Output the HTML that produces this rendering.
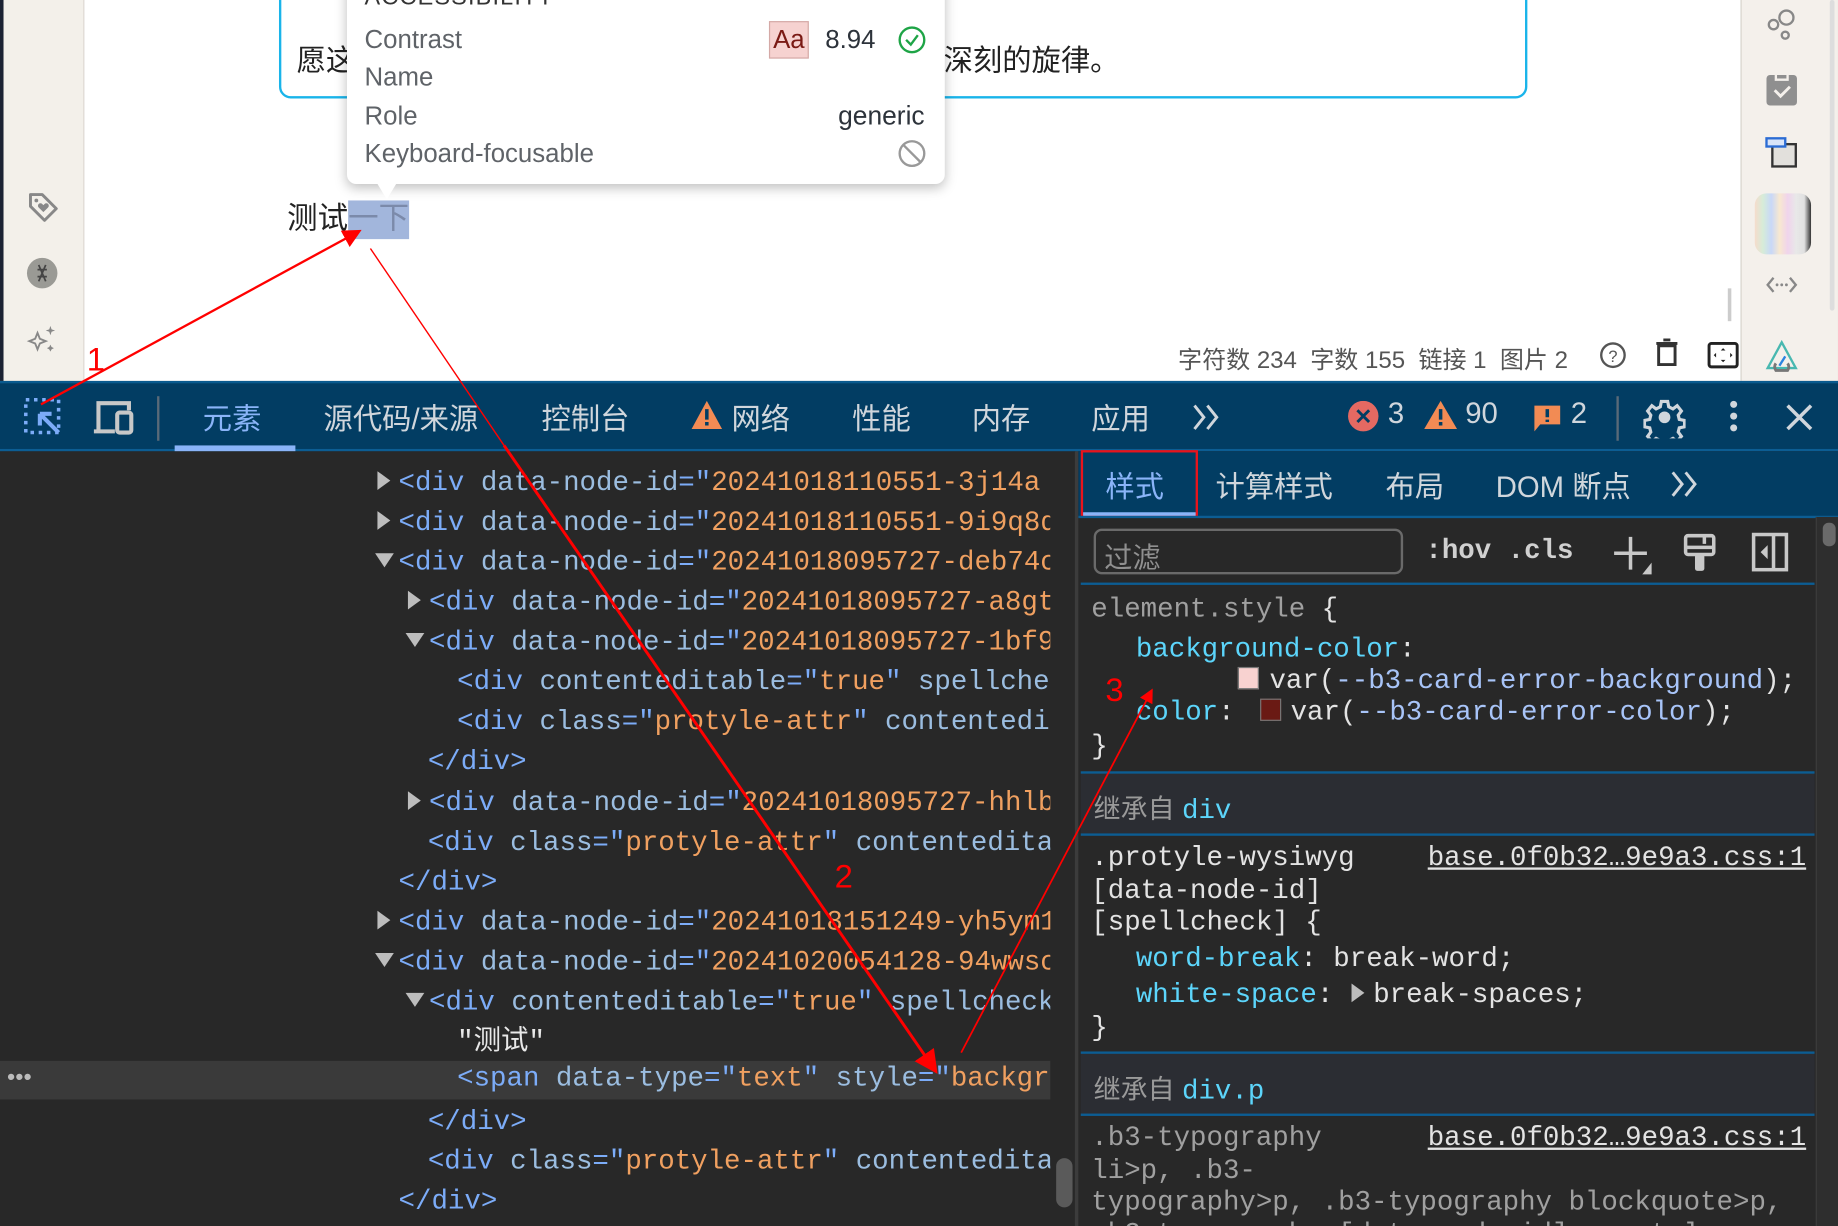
<!DOCTYPE html>
<html><head><meta charset="utf-8"><style>
*{margin:0;padding:0;box-sizing:border-box}
html,body{width:1838px;height:1226px;overflow:hidden;background:#282828}
#w{position:absolute;left:0;top:0;width:1568px;height:1046px;transform:scale(1.17219);transform-origin:0 0;overflow:hidden;font-family:"Liberation Sans","Noto Sans CJK SC",sans-serif}
.a{position:absolute;white-space:pre}
.m{font-family:"Liberation Mono","Noto Sans CJK SC",monospace;font-size:23.4px;line-height:28px}
.tg{color:#7cacf8}.an{color:#9bbde0}.av{color:#f0a060}.tx{color:#e8e8e8}
.tr,.td{display:inline-block;width:20px;height:16px;position:relative}
.tr:before{content:"";position:absolute;left:2px;top:0;border-top:8px solid transparent;border-bottom:8px solid transparent;border-left:11px solid #bdbdbd}
.td:before{content:"";position:absolute;left:0;top:2px;border-left:8px solid transparent;border-right:8px solid transparent;border-top:12px solid #bdbdbd}
.pn{color:#5cd5fb}.vn{color:#a8c4f8}.wt{color:#e3e3e3}.gr{color:#a0a0a0}
.tab{color:#d0d6dc;font-size:25px}
</style></head><body><div id="w">
<!-- left sidebar -->
<div class="a" style="left:0;top:0;width:72px;height:325px;background:#f3f0ea"></div>
<div class="a" style="left:0;top:0;width:3px;height:325px;background:#1b2333"></div>
<div class="a" style="left:71px;top:0;width:1px;height:325px;background:#dedad3"></div>
<svg class="a" style="left:22px;top:162px" width="30" height="30" viewBox="0 0 30 30"><path d="M4 4h10l12 12-10 10L4 14z" fill="none" stroke="#888" stroke-width="2.5" stroke-linejoin="round"/><circle cx="9" cy="9" r="1.6" fill="#888"/><path d="M15 19l-4-4a2 2 0 0 1 3-3l1 1 1-1a2 2 0 0 1 3 3z" fill="#888"/></svg>
<div class="a" style="left:23px;top:220px;width:26px;height:26px;border-radius:13px;background:#9a9a95"></div>
<svg class="a" style="left:23px;top:220px" width="26" height="26"><path d="M10 6l6 14M16 6l-6 14M9 10h8M9 16h8" stroke="#444" stroke-width="1.5" fill="none"/></svg>
<svg class="a" style="left:22px;top:276px" width="28" height="28"><path d="M10 8l2 5 5 2-5 2-2 5-2-5-5-2 5-2z" fill="none" stroke="#888" stroke-width="1.6"/><path d="M21 2l1 3 3 1-3 1-1 3-1-3-3-1 3-1zM21 18l1 2 2 1-2 1-1 2-1-2-2-1 2-1z" fill="#888"/></svg>
<!-- main white -->
<div class="a" style="left:72px;top:0;width:1413px;height:325px;background:#fff"></div>
<div class="a" style="left:238px;top:-20px;width:1065px;height:104px;border:2px solid #19b4ea;border-radius:0 0 10px 10px"></div>
<div class="a" style="left:253px;top:32px;font-size:25px;color:#222">愿这</div>
<div class="a" style="left:805px;top:32px;font-size:25px;color:#222">深刻的旋律。</div>
<div class="a" style="left:245px;top:166px;font-size:26px;color:#222">测试<span style="background:#a2b6dc;color:#7b8aaa;padding-bottom:3px">一下</span></div>
<!-- tooltip -->
<div class="a" style="left:296px;top:-20px;width:510px;height:177px;background:#fff;border-radius:8px;box-shadow:0 3px 10px rgba(0,0,0,.25)"></div>
<div class="a" style="left:319px;top:152px;width:0;height:0;border-left:11px solid transparent;border-right:11px solid transparent;border-top:18px solid #fff"></div>
<div class="a" style="left:311px;top:-13px;font-size:20px;color:#333;letter-spacing:1px">ACCESSIBILITY</div>
<div class="a" style="left:311px;top:21px;font-size:22px;color:#5f6368">Contrast</div>
<div class="a" style="left:311px;top:53px;font-size:22px;color:#5f6368">Name</div>
<div class="a" style="left:311px;top:86px;font-size:22px;color:#5f6368">Role</div>
<div class="a" style="left:311px;top:118px;font-size:22px;color:#5f6368">Keyboard-focusable</div>
<div class="a" style="left:656px;top:18px;width:34px;height:32px;background:#f6d2d0;border:1px solid #d4a9a6;color:#7a1a14;font-size:22px;text-align:center;line-height:30px">Aa</div>
<div class="a" style="left:704px;top:21px;font-size:22px;color:#2d333b">8.94</div>
<svg class="a" style="left:765px;top:21px" width="26" height="26"><circle cx="13" cy="13" r="10.5" fill="none" stroke="#1ea446" stroke-width="2"/><path d="M8 13l4 4 6-8" fill="none" stroke="#1ea446" stroke-width="2"/></svg>
<div class="a" style="left:715px;top:86px;font-size:22.5px;color:#2d333b">generic</div>
<svg class="a" style="left:765px;top:118px" width="26" height="26"><circle cx="13" cy="13" r="10.5" fill="none" stroke="#999" stroke-width="2"/><path d="M6 6l14 14" stroke="#999" stroke-width="2"/></svg>
<!-- status -->
<div class="a" style="left:1005px;top:290px;font-size:20.5px;color:#555">字符数 234  字数 155  链接 1  图片 2</div>
<svg class="a" style="left:1363px;top:290px" width="26" height="26"><circle cx="13" cy="13" r="10" fill="none" stroke="#555" stroke-width="2"/><text x="13" y="19" font-size="14" text-anchor="middle" fill="#555" font-family="Liberation Sans">?</text></svg>
<svg class="a" style="left:1410px;top:287px" width="24" height="28"><path d="M5 8h14v16H5z" fill="none" stroke="#333" stroke-width="2.5"/><path d="M3 6h18M9 3h6" stroke="#333" stroke-width="2.5"/></svg>
<svg class="a" style="left:1456px;top:291px" width="28" height="24"><rect x="2" y="2" width="24" height="20" rx="2" fill="none" stroke="#222" stroke-width="2.5"/><path d="M14 6l-2 2h4zM14 18l-2-2h4zM6 12l2-2v4zM22 12l-2-2v4z" fill="#222"/></svg>
<div class="a" style="left:1474px;top:246px;width:3px;height:28px;background:#ccc"></div>
<!-- right sidebar -->
<div class="a" style="left:1485px;top:0;width:83px;height:325px;background:#f4f0eb"></div>
<div class="a" style="left:1485px;top:0;width:1px;height:325px;background:#dedad3"></div>
<div class="a" style="left:1561px;top:0;width:4px;height:265px;background:#ddd;border-radius:2px"></div>
<svg class="a" style="left:1505px;top:6px" width="30" height="30"><circle cx="8" cy="15" r="4" fill="none" stroke="#888" stroke-width="2"/><circle cx="19" cy="9" r="6" fill="none" stroke="#888" stroke-width="2"/><circle cx="18" cy="24" r="3" fill="none" stroke="#888" stroke-width="2"/></svg>
<svg class="a" style="left:1505px;top:60px" width="30" height="32"><rect x="2" y="4" width="26" height="26" rx="3" fill="#8f8f8f"/><path d="M10 4v4h10V4" fill="none" stroke="#f4f0eb" stroke-width="2"/><path d="M9 17l5 5 8-8" fill="none" stroke="#f4f0eb" stroke-width="2.5"/></svg>
<svg class="a" style="left:1505px;top:116px" width="30" height="28"><rect x="7" y="7" width="20" height="19" fill="#e2e0dc" stroke="#333" stroke-width="2"/><rect x="2" y="2" width="16" height="7" fill="#d8e4f8" stroke="#2b6cd4" stroke-width="2"/></svg>
<div class="a" style="left:1497px;top:165px;width:48px;height:52px;border-radius:10px;background:linear-gradient(90deg,#f6dccc,#d6ecd8,#c8d8f8,#f8e8d0,#f0d4ec,#e8e8e8,#e0e0e0 88%,#333)"></div>
<svg class="a" style="left:1506px;top:234px" width="28" height="18"><path d="M7 3L2 9l5 6M21 3l5 6-5 6" fill="none" stroke="#888" stroke-width="2"/><circle cx="10" cy="9" r="1.2" fill="#888"/><circle cx="14" cy="9" r="1.2" fill="#888"/><circle cx="18" cy="9" r="1.2" fill="#888"/></svg>
<svg class="a" style="left:1505px;top:290px" width="30" height="28"><path d="M15 2L27 24H3z" fill="none" stroke="#48b8b0" stroke-width="2"/><path d="M10 20a5 5 0 0 0 0 6h10a5 5 0 0 0 0-6" fill="none" stroke="#777" stroke-width="2.5"/><path d="M13 22l5-8" stroke="#2b84e0" stroke-width="2"/></svg>
<!-- devtools toolbar -->
<div class="a" style="left:0;top:325px;width:1568px;height:60px;background:#023d63;border-top:2px solid #0a5a8e;border-bottom:2px solid #0c5d93"></div>
<svg class="a" style="left:20px;top:339px" width="34" height="34"><rect x="2" y="2" width="28" height="28" fill="none" stroke="#7cacf8" stroke-width="3" stroke-dasharray="3 4"/><path d="M14 14l16 16M14 14v10M14 14h10" stroke="#7cacf8" stroke-width="3.5" fill="none"/></svg>
<svg class="a" style="left:80px;top:340px" width="36" height="32"><path d="M4 28V4h26v6" fill="none" stroke="#c8c8c8" stroke-width="3.5"/><rect x="20" y="12" width="12" height="17" rx="2" fill="none" stroke="#c8c8c8" stroke-width="3.5"/><path d="M0 28h18" stroke="#c8c8c8" stroke-width="3.5"/></svg>
<div class="a" style="left:134px;top:338px;width:2px;height:38px;background:#5a6a78"></div>
<div class="a tab" style="left:173px;top:338px;color:#8ab4f8">元素</div>
<div class="a" style="left:149px;top:380px;width:103px;height:5px;background:#8ab4f8"></div>
<div class="a tab" style="left:276px;top:338px">源代码/来源</div>
<div class="a tab" style="left:462px;top:338px">控制台</div>
<svg class="a" style="left:589px;top:341px" width="28" height="26"><path d="M14 1L27 25H1z" fill="#f28b54"/><path d="M14 8v9M14 19v3" stroke="#023d63" stroke-width="3"/></svg>
<div class="a tab" style="left:624px;top:338px">网络</div>
<div class="a tab" style="left:727px;top:338px">性能</div>
<div class="a tab" style="left:829px;top:338px">内存</div>
<div class="a tab" style="left:931px;top:338px">应用</div>
<svg class="a" style="left:1016px;top:343px" width="28" height="26"><path d="M3 3l8 10-8 10M14 3l8 10-8 10" fill="none" stroke="#d0d6dc" stroke-width="2.5"/></svg>
<svg class="a" style="left:1150px;top:342px" width="28" height="28"><circle cx="13" cy="13" r="13" fill="#e46962"/><path d="M8 8l10 10M18 8L8 18" stroke="#023d63" stroke-width="2.5"/></svg>
<div class="a tab" style="left:1184px;top:339px">3</div>
<svg class="a" style="left:1214px;top:341px" width="30" height="26"><path d="M15 1L29 25H1z" fill="#f28b54"/><path d="M15 8v9M15 19v3" stroke="#023d63" stroke-width="3"/></svg>
<div class="a tab" style="left:1250px;top:339px">90</div>
<svg class="a" style="left:1307px;top:344px" width="26" height="26"><path d="M2 2h22v16H7l-5 6z" fill="#f28b54"/><path d="M13 5v7M13 14v2" stroke="#023d63" stroke-width="3"/></svg>
<div class="a tab" style="left:1340px;top:339px">2</div>
<div class="a" style="left:1379px;top:338px;width:2px;height:38px;background:#5a6a78"></div>
<svg class="a" style="left:1402px;top:338px" width="36" height="36"><circle cx="18" cy="18" r="5" fill="#d0d6dc"/><path d="M15 3h6l1 5 4 2 4-3 4 5-3 4 1 4 5 1v6l-5 1-1 4 3 4-4 5-4-3-4 2-1 5h-6l-1-5-4-2-4 3-4-5 3-4-1-4-5-1v-6l5-1 1-4-3-4 4-5 4 3 4-2z" transform="scale(.9) translate(2 2)" fill="none" stroke="#d0d6dc" stroke-width="3"/></svg>
<div class="a" style="left:1476px;top:342px;width:6px;height:6px;border-radius:3px;background:#d0d6dc;box-shadow:0 10px 0 #d0d6dc,0 20px 0 #d0d6dc"></div>
<svg class="a" style="left:1522px;top:343px" width="26" height="26"><path d="M3 3l20 20M23 3L3 23" stroke="#d0d6dc" stroke-width="3"/></svg>
<!-- elements panel -->
<div class="a" style="left:0;top:385px;width:918px;height:661px;background:#282828"></div>
<div class="a" style="left:0;top:905px;width:896px;height:33px;background:#3a3a3a"></div>
<div class="a" style="left:6px;top:908px;color:#bbb;font-size:20px">•••</div>
<div class="a" style="left:901px;top:988px;width:14px;height:42px;border-radius:7px;background:#5a5a5a"></div>
<div class="a" style="left:917px;top:385px;width:3px;height:661px;background:#3c3c3c"></div>
<div style="position:absolute;left:0;top:388px;width:896px;height:658px;overflow:hidden">
<div class="a m" style="left:320px;top:11px"><span class="tr"></span><span class="tg">&lt;div</span> <span class="an">data-node-id</span><span class="tg">="</span><span class="av">20241018110551-3j14a</span></div>
<div class="a m" style="left:320px;top:45px"><span class="tr"></span><span class="tg">&lt;div</span> <span class="an">data-node-id</span><span class="tg">="</span><span class="av">20241018110551-9i9q8d</span></div>
<div class="a m" style="left:320px;top:79px"><span class="td"></span><span class="tg">&lt;div</span> <span class="an">data-node-id</span><span class="tg">="</span><span class="av">20241018095727-deb74c</span></div>
<div class="a m" style="left:346px;top:113px"><span class="tr"></span><span class="tg">&lt;div</span> <span class="an">data-node-id</span><span class="tg">="</span><span class="av">20241018095727-a8gt</span></div>
<div class="a m" style="left:346px;top:147px"><span class="td"></span><span class="tg">&lt;div</span> <span class="an">data-node-id</span><span class="tg">="</span><span class="av">20241018095727-1bf9</span></div>
<div class="a m" style="left:390px;top:181px"><span class="tg">&lt;div</span> <span class="an">contenteditable</span><span class="tg">="</span><span class="av">true</span><span class="tg">"</span> <span class="an">spellcheck</span></div>
<div class="a m" style="left:390px;top:215px"><span class="tg">&lt;div</span> <span class="an">class</span><span class="tg">="</span><span class="av">protyle-attr</span><span class="tg">"</span> <span class="an">contenteditable</span></div>
<div class="a m" style="left:365px;top:249px"><span class="tg">&lt;/div&gt;</span></div>
<div class="a m" style="left:346px;top:284px"><span class="tr"></span><span class="tg">&lt;div</span> <span class="an">data-node-id</span><span class="tg">="</span><span class="av">20241018095727-hhlb</span></div>
<div class="a m" style="left:365px;top:318px"><span class="tg">&lt;div</span> <span class="an">class</span><span class="tg">="</span><span class="av">protyle-attr</span><span class="tg">"</span> <span class="an">contenteditable</span></div>
<div class="a m" style="left:340px;top:352px"><span class="tg">&lt;/div&gt;</span></div>
<div class="a m" style="left:320px;top:386px"><span class="tr"></span><span class="tg">&lt;div</span> <span class="an">data-node-id</span><span class="tg">="</span><span class="av">20241018151249-yh5ym1</span></div>
<div class="a m" style="left:320px;top:420px"><span class="td"></span><span class="tg">&lt;div</span> <span class="an">data-node-id</span><span class="tg">="</span><span class="av">20241020054128-94wwsc</span></div>
<div class="a m" style="left:346px;top:454px"><span class="td"></span><span class="tg">&lt;div</span> <span class="an">contenteditable</span><span class="tg">="</span><span class="av">true</span><span class="tg">"</span> <span class="an">spellcheck</span></div>
<div class="a m tx" style="left:390px;top:488px">"测试"</div>
<div class="a m" style="left:390px;top:519px"><span class="tg">&lt;span</span> <span class="an">data-type</span><span class="tg">="</span><span class="av">text</span><span class="tg">"</span> <span class="an">style</span><span class="tg">="</span><span class="av">background</span></div>
<div class="a m" style="left:365px;top:556px"><span class="tg">&lt;/div&gt;</span></div>
<div class="a m" style="left:365px;top:590px"><span class="tg">&lt;div</span> <span class="an">class</span><span class="tg">="</span><span class="av">protyle-attr</span><span class="tg">"</span> <span class="an">contenteditable</span></div>
<div class="a m" style="left:340px;top:624px"><span class="tg">&lt;/div&gt;</span></div>
</div>
<!-- styles panel -->
<div class="a" style="left:920px;top:385px;width:648px;height:661px;background:#282828"></div>
<div class="a" style="left:920px;top:385px;width:648px;height:57px;background:#023d63;border-bottom:2px solid #0c5d93"></div>
<div class="a" style="left:922px;top:384px;width:100px;height:56px;border:2px solid #e8141c"></div>
<div class="a tab" style="left:943px;top:396px;color:#8ab4f8">样式</div>
<div class="a" style="left:924px;top:437px;width:96px;height:3px;background:#8ab4f8"></div>
<div class="a tab" style="left:1037px;top:396px">计算样式</div>
<div class="a tab" style="left:1182px;top:396px">布局</div>
<div class="a tab" style="left:1276px;top:396px">DOM 断点</div>
<svg class="a" style="left:1424px;top:400px" width="28" height="26"><path d="M3 3l8 10-8 10M14 3l8 10-8 10" fill="none" stroke="#d0d6dc" stroke-width="2.5"/></svg>
<div class="a" style="left:933px;top:451px;width:264px;height:39px;border:2px solid #6a6a6a;border-radius:7px"></div>
<div class="a" style="left:942px;top:456px;font-size:24px;color:#909090">过滤</div>
<div class="a m" style="left:1216px;top:457px;color:#d0d0d0;font-weight:bold">:hov .cls</div>
<svg class="a" style="left:1375px;top:456px" width="36" height="36"><path d="M16 2v28M2 16h28" stroke="#c8c8c8" stroke-width="3"/><path d="M34 24v10h-8z" fill="#c8c8c8"/></svg>
<svg class="a" style="left:1436px;top:455px" width="28" height="34"><rect x="2" y="2" width="24" height="16" rx="2" fill="none" stroke="#c8c8c8" stroke-width="3"/><path d="M2 12h24M18 2v7" stroke="#c8c8c8" stroke-width="3"/><rect x="10" y="18" width="8" height="14" rx="2" fill="#c8c8c8"/></svg>
<svg class="a" style="left:1494px;top:454px" width="32" height="34"><rect x="2" y="2" width="28" height="30" fill="none" stroke="#c8c8c8" stroke-width="3"/><path d="M19 2v30" stroke="#c8c8c8" stroke-width="3"/><path d="M14 11v12l-6-6z" fill="#c8c8c8"/></svg>
<div class="a" style="left:922px;top:497px;width:626px;height:2px;background:#0c5d93"></div>
<div class="a" style="left:1549px;top:441px;width:19px;height:605px;background:#2e2e2e;border-left:1px solid #3c3c3c"></div>
<div class="a" style="left:1555px;top:446px;width:11px;height:20px;border-radius:5px;background:#6a6a6a"></div>
<div class="a m gr" style="left:931px;top:507px">element.style <span class="wt">{</span></div>
<div class="a m" style="left:969px;top:541px"><span class="pn">background-color</span><span class="wt">:</span></div>
<div class="a" style="left:1056px;top:569px;width:18px;height:19px;background:#f8d2d0;border:1px solid #777"></div>
<div class="a m wt" style="left:1083px;top:568px">var(<span class="vn">--b3-card-error-background</span>);</div>
<div class="a m" style="left:969px;top:595px"><span class="pn">color</span><span class="wt">:</span></div>
<div class="a" style="left:1075px;top:596px;width:18px;height:19px;background:#6a1a14;border:1px solid #777"></div>
<div class="a m wt" style="left:1101px;top:595px">var(<span class="vn">--b3-card-error-color</span>);</div>
<div class="a m wt" style="left:931px;top:624px">}</div>
<div class="a" style="left:922px;top:658px;width:626px;height:55px;background:#2b2d33;border-top:2px solid #0c5d93;border-bottom:2px solid #0c5d93"></div>
<div class="a" style="left:933px;top:671px;font-size:23px;color:#9a9a9a">继承自 <span class="m pn">div</span></div>
<div class="a m wt" style="left:931px;top:719px">.protyle-wysiwyg</div>
<div class="a m wt" style="left:1218px;top:719px;text-decoration:underline">base.0f0b32…9e9a3.css:1</div>
<div class="a m wt" style="left:931px;top:747px">[data-node-id]</div>
<div class="a m wt" style="left:931px;top:774px">[spellcheck] {</div>
<div class="a m" style="left:969px;top:805px"><span class="pn">word-break</span><span class="wt">: break-word;</span></div>
<div class="a m" style="left:969px;top:836px"><span class="pn">white-space</span><span class="wt">: <span class="tr"></span>break-spaces;</span></div>
<div class="a m wt" style="left:931px;top:864px">}</div>
<div class="a" style="left:922px;top:897px;width:626px;height:55px;background:#2b2d33;border-top:2px solid #0c5d93;border-bottom:2px solid #0c5d93"></div>
<div class="a" style="left:933px;top:910px;font-size:23px;color:#9a9a9a">继承自 <span class="m pn">div.p</span></div>
<div class="a m gr" style="left:931px;top:958px">.b3-typography</div>
<div class="a m wt" style="left:1218px;top:958px;text-decoration:underline">base.0f0b32…9e9a3.css:1</div>
<div class="a m gr" style="left:931px;top:986px">li&gt;p, .b3-</div>
<div class="a m gr" style="left:931px;top:1013px">typography&gt;p, .b3-typography blockquote&gt;p,</div>
<div class="a m gr" style="left:931px;top:1040px">.b3-typography [data-node-id] .protyle</div>
<!-- red annotations -->
<svg class="a" style="left:0;top:0" width="1568" height="1046">
<defs><marker id="ah" markerWidth="8" markerHeight="8" refX="6" refY="4" orient="auto"><path d="M0 0L8 4L0 8z" fill="#f00"/></marker></defs>
<line x1="35" y1="345" x2="305" y2="198" stroke="#f00" stroke-width="2" marker-end="url(#ah)"/>
<line x1="316" y1="212" x2="430" y2="380" stroke="#f00" stroke-width="1.2"/>
<line x1="430" y1="380" x2="797" y2="912" stroke="#f00" stroke-width="2.5" marker-end="url(#ah)"/>
<line x1="820" y1="898" x2="982" y2="590" stroke="#f00" stroke-width="1.5" marker-end="url(#ah)"/>
<text x="74" y="316" font-size="28" fill="#f00" font-family="Liberation Sans">1</text>
<text x="712" y="757" font-size="28" fill="#f00" font-family="Liberation Sans">2</text>
<text x="943" y="598" font-size="28" fill="#f00" font-family="Liberation Sans">3</text>
</svg>
</div></body></html>
